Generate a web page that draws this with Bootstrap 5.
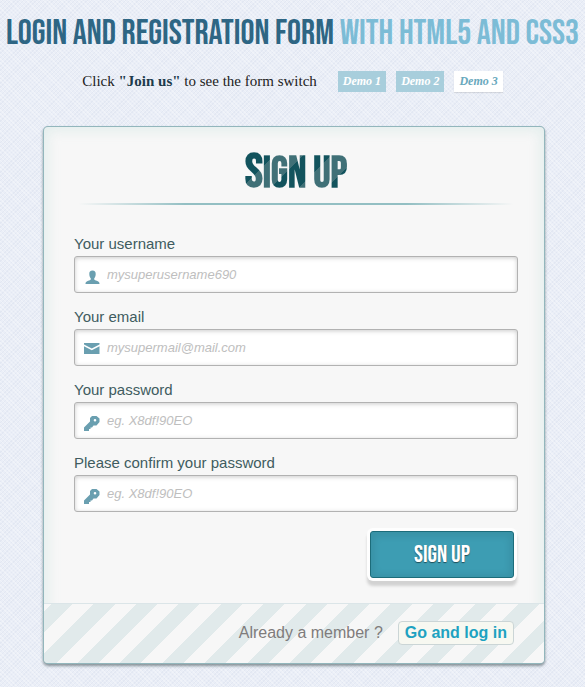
<!DOCTYPE html>
<html lang="en">
<head>
<meta charset="utf-8">
<meta name="viewport" content="width=device-width, initial-scale=1">
<title>Login and Registration Form</title>
<link href="https://cdn.jsdelivr.net/npm/bootstrap@5.3.0/dist/css/bootstrap.min.css" rel="stylesheet">
<style>
  body {
    font-family: "Liberation Sans", Arial, sans-serif;
    background-color: #eaeef7;
    background-image:
      repeating-linear-gradient(45deg, rgba(255,255,255,.3) 0 1px, transparent 1px 3px),
      repeating-linear-gradient(-45deg, rgba(180,192,215,.14) 0 1px, transparent 1px 3px);
  }
  .display-face { font-family: "Bebas Neue", "BebasNeueRegular", "Liberation Sans Narrow", "Arial Narrow", "Liberation Sans", sans-serif; }
  .page-title { font-size: 35px; line-height: 36px; color: #2e6684; font-weight: 400; margin-bottom: 19px; }
  .page-title span { color: #7cbcd6; }
  .demos { font-family: "Liberation Serif", "Times New Roman", serif; font-size: 15px; line-height: 21px; color: #222; gap: 21px; }
  .demos strong { color: #1c3b4c; }
  .demo-list { gap: 10px; }
  .demo-link { font-size: 12px; font-weight: 700; font-style: italic; color: #fff; background: #a8cedc; padding: 0 5px; }
  .demo-link.current { background: #fff; color: #6aa9bd; box-shadow: 0 1px 1px rgba(0,0,0,.1); }
  .form-panel {
    margin: 34px 40px 0 43px;
    background: #f7f7f7;
    border: 1px solid rgba(120,165,172,.8);
    border-radius: 5px;
    box-shadow: 0 2px 3px rgba(70,85,90,.6), inset 0 0 12px 4px rgba(200,224,222,.4);
  }
  .form-area { padding: 24px 26px 17px 30px; }
  .panel-title {
    font-size: 43px; line-height: 44px; font-weight: 700;
    color: transparent;
    background: repeating-linear-gradient(-45deg, #12535d 0 20px, #407077 20px 40px);
    -webkit-background-clip: text; background-clip: text;
  }
  .panel-title::first-letter { font-size: 48px; }
  .title-rule { height: 2px; margin-top: 7px; background: linear-gradient(to right, rgba(147,184,189,0) 1%, #93bfc3 25%, #93bfc3 75%, rgba(147,184,189,0) 99%); }
  .fields { padding-top: 27px; gap: 12px; }
  .field-name { font-size: 15px; line-height: 24px; color: #405c60; }
  .field-icon { left: 10px; bottom: 7px; color: #6a9fb0; pointer-events: none; }
  .field-box {
    height: 37px; font-size: 13px; font-style: italic; color: #555;
    padding: 0 5px 0 32px; border: 1px solid #b2b2b2; border-radius: 3px;
    box-shadow: inset 0 1px 4px rgba(168,168,168,.6);
  }
  .field-box::placeholder { color: #bebebe; }
  .submit-row { padding-top: 19px; }
  .submit {
    width: 144px; height: 47px; margin-right: 4px;
    font-size: 24px; font-weight: 400; color: #fff; background: #3d9db3;
    border: 1px solid #1c6c7a; border-radius: 3px;
    text-shadow: 0 1px 1px rgba(0,0,0,.5);
    box-shadow: 0 1px 6px 4px rgba(0,0,0,.07) inset, 0 0 0 3px #fefefe, 0 5px 3px 3px #d2d2d2;
  }
  .switch-bar {
    height: 60px; font-size: 16px; padding: 0 30px 2px 0; color: #7f7c7c; gap: 15px;
    border-top: 1px solid #dbe5e8; border-radius: 0 0 4px 4px;
    background: repeating-linear-gradient(-45deg, #f7f7f7 0 15px, #e1eaeb 15px 30px);
  }
  .switch-link {
    font-weight: 700; color: #1da2c1; line-height: 22px; padding: 0 6px;
    background: #f7f8f1; border: 1px solid #cbd5d6; border-radius: 4px;
  }
</style>
</head>
<body class="min-vh-100 pb-3">
<header class="text-center">
  <h1 class="page-title display-face text-uppercase text-nowrap pt-3">Login and Registration Form <span>with HTML5 and CSS3</span></h1>
  <nav class="demos d-flex justify-content-center align-items-center" aria-label="Demos">
    <span>Click <strong>"Join us"</strong> to see the form switch</span>
    <span class="demo-list d-flex">
      <a class="demo-link text-decoration-none" href="#">Demo 1</a>
      <a class="demo-link text-decoration-none" href="#">Demo 2</a>
      <a class="demo-link current text-decoration-none" href="#" aria-current="page">Demo 3</a>
    </span>
  </nav>
</header>
<main class="form-panel">
  <form>
    <div class="form-area">
      <div class="d-flex justify-content-center"><h2 class="panel-title display-face text-uppercase mb-0">Sign up</h2></div>
      <div class="title-rule"></div>
      <div class="fields d-grid">
        <div>
          <label class="field-name d-block" for="username">Your username</label>
          <div class="position-relative">
            <svg class="field-icon position-absolute" width="16" height="16" viewBox="0 1 16 16" fill="currentColor" aria-hidden="true"><path d="M8.500 1.500c2.300 0 3.300 1.300 3.200 3.500-.1 2-.5 3.500-1.500 4.400v1.100c.8.900 2.300 1.100 3.600 1.700 1.200.5 1.700 1.300 1.700 2.800H1.500c0-1.500.5-2.300 1.700-2.800 1.300-.6 2.800-.8 3.600-1.700V9.400c-1-.9-1.400-2.400-1.500-4.400C5.200 2.800 6.200 1.500 8.500 1.500z"/></svg>
            <input class="field-box form-control" id="username" type="text" placeholder="mysuperusername690">
          </div>
        </div>
        <div>
          <label class="field-name d-block" for="email">Your email</label>
          <div class="position-relative">
            <svg class="field-icon position-absolute" width="16" height="16" viewBox="0 0 16 16" fill="currentColor" aria-hidden="true"><path d="M0 0h15.500v1.400L7.800 5.500 0 1.400zM0 3.200l7.800 4.100 7.700-4.100V11H0z"/></svg>
            <input class="field-box form-control" id="email" type="email" placeholder="mysupermail@mail.com">
          </div>
        </div>
        <div>
          <label class="field-name d-block" for="password">Your password</label>
          <div class="position-relative">
            <svg class="field-icon position-absolute" width="16" height="16" viewBox="0 0 16 16" fill="currentColor" aria-hidden="true"><path fill-rule="evenodd" d="M8 0h4.500L15.500 2.500V6l-3 3.500H9.500L8 11.500H6.500V13H5v2H0v-3.500l6-6V2zM11 3a1.300 1.300 0 1 0 0 2.600A1.300 1.300 0 0 0 11 3z"/></svg>
            <input class="field-box form-control" id="password" type="password" placeholder="eg. X8df!90EO">
          </div>
        </div>
        <div>
          <label class="field-name d-block" for="confirm">Please confirm your password</label>
          <div class="position-relative">
            <svg class="field-icon position-absolute" width="16" height="16" viewBox="0 0 16 16" fill="currentColor" aria-hidden="true"><path fill-rule="evenodd" d="M8 0h4.500L15.500 2.500V6l-3 3.500H9.500L8 11.500H6.500V13H5v2H0v-3.500l6-6V2zM11 3a1.300 1.300 0 1 0 0 2.600A1.300 1.300 0 0 0 11 3z"/></svg>
            <input class="field-box form-control" id="confirm" type="password" placeholder="eg. X8df!90EO">
          </div>
        </div>
      </div>
      <div class="submit-row d-flex justify-content-end pb-2">
        <button class="submit display-face text-uppercase p-0" type="submit">Sign up</button>
      </div>
    </div>
    <div class="switch-bar d-flex justify-content-end align-items-center">
      <span>Already a member ?</span>
      <a class="switch-link text-decoration-none" href="#">Go and log in</a>
    </div>
  </form>
</main>
<script src="https://cdn.jsdelivr.net/npm/bootstrap@5.3.0/dist/js/bootstrap.bundle.min.js"></script>
</body>
</html>
